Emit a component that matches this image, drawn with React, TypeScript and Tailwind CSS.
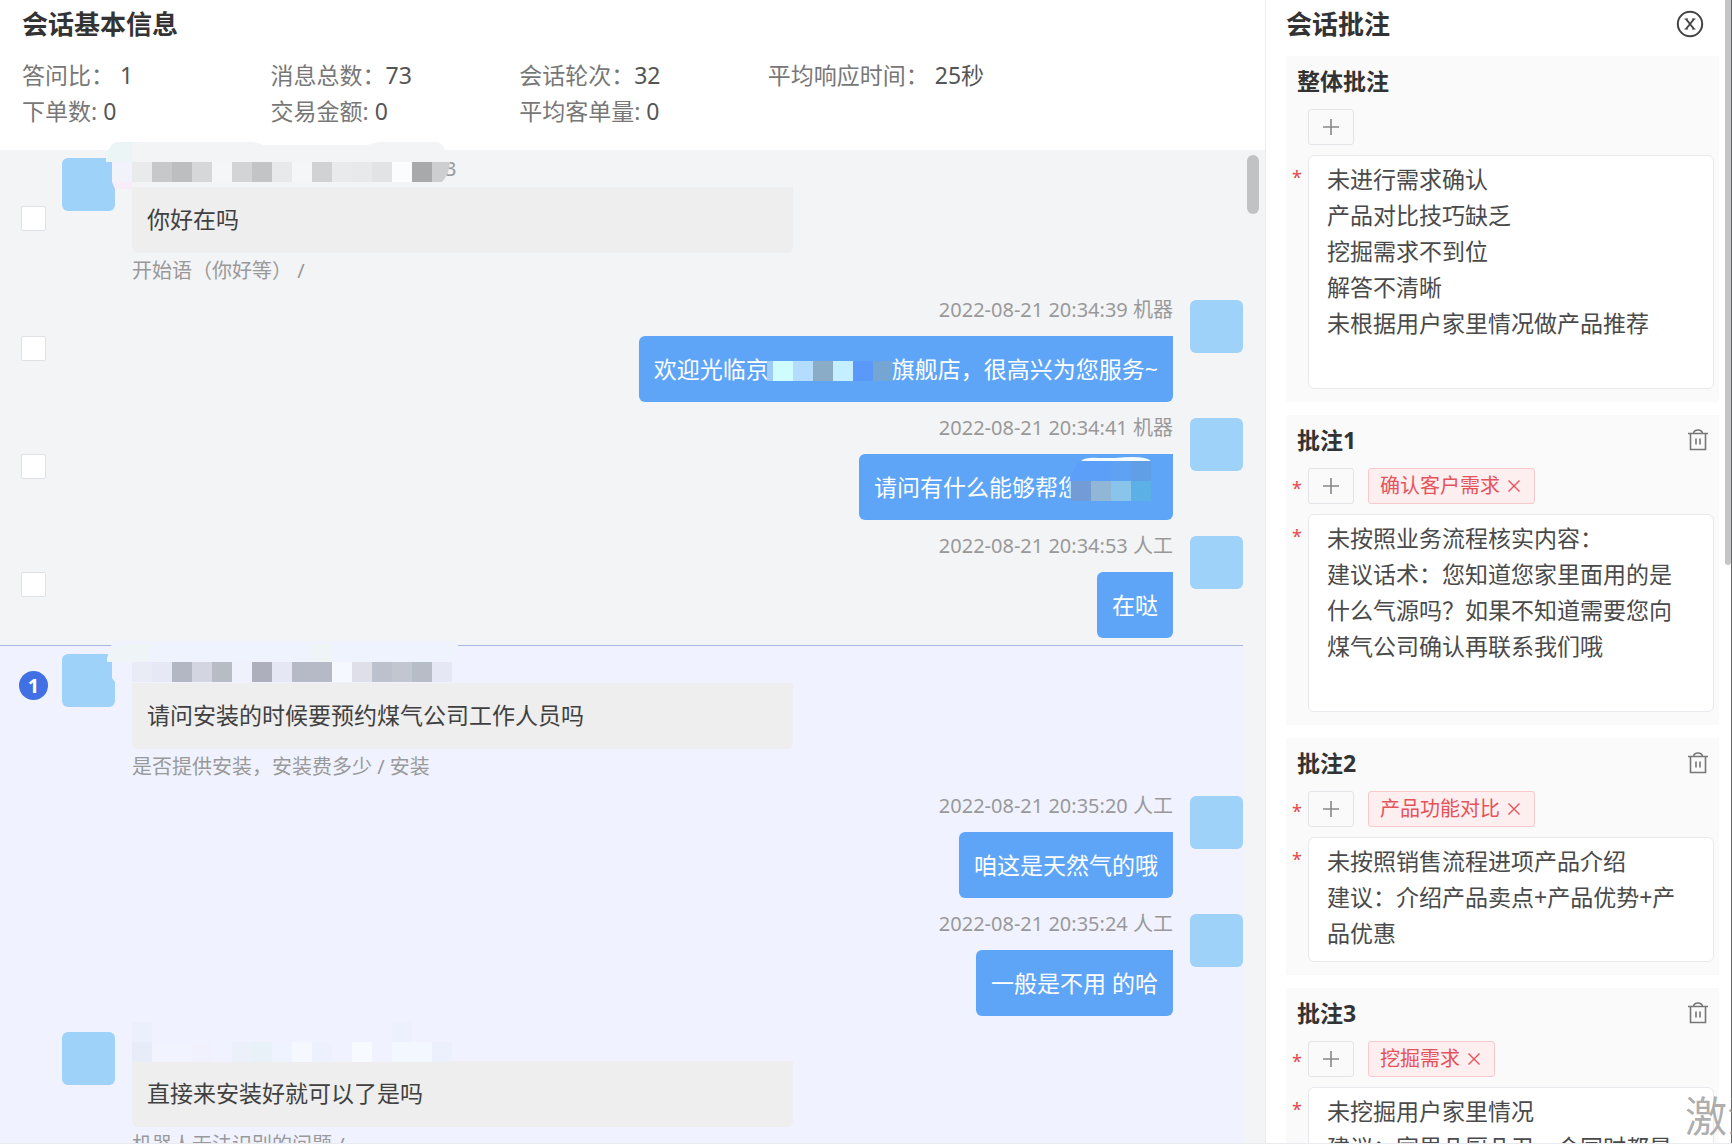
import type { ReactNode } from 'react'

type Message = {
	id: number
	from: 'user' | 'staff'
	time?: string
	sender?: ReactNode
	text: ReactNode
	note?: string
	badge?: number
	hideCheckbox?: boolean
}

type Annotation = {
	title: string
	tag?: string
	text: string
	height: string
}

const stats = [
	['答问比：', ' 1'],
	['消息总数：', '73'],
	['会话轮次：', '32'],
	['平均响应时间：', ' 25秒'],
	['', ''],
	['下单数:', ' 0'],
	['交易金额:', ' 0'],
	['平均客单量:', ' 0'],
]

const annotations: Annotation[] = [
	{
		title: '整体批注',
		text: '未进行需求确认\n产品对比技巧缺乏\n挖掘需求不到位\n解答不清晰\n未根据用户家里情况做产品推荐',
		height: 'h-[234px]',
	},
	{
		title: '批注1',
		tag: '确认客户需求',
		text: '未按照业务流程核实内容：\n建议话术：您知道您家里面用的是什么气源吗？如果不知道需要您向煤气公司确认再联系我们哦',
		height: 'h-[198px]',
	},
	{
		title: '批注2',
		tag: '产品功能对比',
		text: '未按照销售流程进项产品介绍\n建议：介绍产品卖点+产品优势+产品优惠',
		height: 'h-[125px]',
	},
	{
		title: '批注3',
		tag: '挖掘需求',
		text: '未挖掘用户家里情况\n建议：家里几厨几卫，会同时都是',
		height: 'h-[125px]',
	},
]

function Cells({ colors, y, x = 0 }: { colors: string[]; y: number; x?: number }) {
	return (
		<g shapeRendering="crispEdges">
			{colors.map((c, i) => (
				<rect key={i} x={x + i * 20} y={y} width="20" height="20" fill={c} />
			))}
		</g>
	)
}

function SenderMask({ children }: { children: ReactNode }) {
	return (
		<svg className="absolute left-0 top-0 h-[29px] w-80 overflow-visible" aria-hidden="true">
			{children}
		</svg>
	)
}

const senderOne = (
	<>
		<span className="pl-[313px]">3</span>
		<SenderMask>
			<path d="M-26 4V0Q-22 -16 -14 -16H121L132 -13H235L247 -16H306Q313 -14 318 4Z" fill="#f3f4f6" />
			<path d="M-26 4V0Q-22 -16 -14 -16H0V4Z" fill="#ecf5f5" />
			<path d="M-20 4H0V24H-20Z" fill="#f1f2fa" />
			<path d="M-20 24H0V31H-17Z" fill="#f7ecf7" />
			<Cells
				y={4}
				colors={['#e9eaec', '#c7c8ca', '#bdbec0', '#d6d7d9', '#f5f6f8', '#d3d4d6', '#c3c4c6', '#e8e9eb', '#f5f6f8', '#d1d2d4', '#e9eaec', '#e8e9eb', '#e2e3e5', '#fafcfe', '#a8a9ab']}
			/>
			<path d="M300 4H318Q318 15 310 24H300Z" fill="#cdced0" />
		</SenderMask>
	</>
)

const senderTwo = (
	<SenderMask>
		<path d="M-25 8V4L-19 -13H323L327 -7V8Z" fill="#eff3fe" />
		<path d="M-25 8V4L-19 -7L0 -10H18V8Z" fill="#eff4f6" />
		<path d="M180 -10H200V8H180Z" fill="#eff4f6" />
		<path d="M-20 8H0V28H-17L-20 24Z" fill="#f0f3ff" />
		<Cells
			y={8}
			colors={['#e9ecf6', '#e6e9f5', '#b3b6c3', '#d3d5e0', '#b8bdc5', '#eff1fd', '#adb0bc', '#e5e8f4', '#b6b9c6', '#b6b9c6', '#f5f8fe', '#dfdfe9', '#bdc0cd', '#c2c6d0', '#b7bdc6', '#e5e8f4']}
		/>
	</SenderMask>
)

const senderThree = (
	<SenderMask>
		<rect x="0" y="-10" width="20" height="20" fill="#ecf0fc" />
		<rect x="260" y="-10" width="20" height="20" fill="#edf1fe" />
		<Cells
			y={10}
			colors={['#e8ecf8', '#f1f3ff', '#f1f3ff', '#f1f1fd', '#f0f3ff', '#ebf0fa', '#e9f1f8', '#eff3ff', '#f5f9ff', '#edf0fd', '#f0f3ff', '#f7faff', '#f0f3ff', '#f3f7ff', '#f3f7ff', '#ecf0fd']}
		/>
	</SenderMask>
)

const welcomeText = (
	<>
		欢迎光临京
		<svg className="-ml-0.5 mt-1 h-5 w-[125px]" aria-hidden="true">
			<rect width="6" height="20" fill="#9dccfb" />
			<Cells x={6} y={0} colors={['#cffdff', '#b3dcfe', '#8bacc6', '#c5efff', '#5a99f8', '#74a5d3']} />
		</svg>
		旗舰店，很高兴为您服务~
	</>
)

const helpText = (
	<>
		请问有什么能够帮您
		<svg className="-ml-3 mb-4 h-11 w-[89px]" aria-hidden="true">
			<path d="M12 4Q16 0 30 1H46Q76 -2 82 4Z" fill="#f4fbff" />
			<path d="M12 4H82V24H0Q4 10 12 4Z" fill="#5c9ff9" />
			<path d="M42 4H62V24H42Z" fill="#5fa2f3" />
			<path d="M62 4H82V24H62Z" fill="#609fe6" />
			<path d="M0 24H6V44H3L0 38Z" fill="#a9dcfb" />
			<Cells x={2} y={24} colors={['#739bd6', '#92b6d6', '#89c5ea', '#5bb0e6']} />
		</svg>
	</>
)

const messages: Message[] = [
	{ id: 1, from: 'user', sender: senderOne, text: '你好在吗', note: '开始语（你好等） /' },
	{ id: 2, from: 'staff', time: '2022-08-21 20:34:39 机器', text: welcomeText },
	{ id: 3, from: 'staff', time: '2022-08-21 20:34:41 机器', text: helpText },
	{ id: 4, from: 'staff', time: '2022-08-21 20:34:53 人工', text: '在哒' },
]

const markedMessages: Message[] = [
	{ id: 5, from: 'user', badge: 1, sender: senderTwo, text: '请问安装的时候要预约煤气公司工作人员吗', note: '是否提供安装，安装费多少 / 安装' },
	{ id: 6, from: 'staff', time: '2022-08-21 20:35:20 人工', text: '咱这是天然气的哦', hideCheckbox: true },
	{ id: 7, from: 'staff', time: '2022-08-21 20:35:24 人工', text: '一般是不用 的哈', hideCheckbox: true },
	{ id: 8, from: 'user', sender: senderThree, text: '直接来安装好就可以了是吗', note: '机器人无法识别的问题 /', hideCheckbox: true },
]

function Avatar() {
	return <div className="size-[53px] shrink-0 rounded-md bg-[#9fd2f9]" />
}

function Select({ message }: { message: Message }) {
	if (message.badge) {
		return (
			<div className="mt-[17px] flex size-[29px] items-center justify-center rounded-full bg-[#416fe4] text-[20px] font-bold leading-5 text-white">
				{message.badge}
			</div>
		)
	}
	if (message.hideCheckbox) return null
	return (
		<input
			type="checkbox"
			aria-label={`选择消息 ${message.id}`}
			className={`size-[25px] appearance-none rounded-xs border border-[#dfe1e5] bg-white ${message.from === 'user' ? 'mt-12' : 'mt-9'}`}
		/>
	)
}

function MessageRow({ message }: { message: Message }) {
	return (
		<div className="flex pl-[19px]">
			<div className="mr-3.5 flex w-[29px] shrink-0 items-start justify-center">
				<Select message={message} />
			</div>
			{message.from === 'user' ? (
				<div className="flex gap-[17px]">
					<Avatar />
					<div>
						<div className="relative h-[29px] w-[661px] text-[20px] leading-[22px] text-[#999]">{message.sender}</div>
						<div className="rounded-b-md bg-[#eeeeee] px-[15px] pb-4 pt-3.5 leading-9 text-[#404040]">{message.text}</div>
						<div className="h-[31px] text-[20px] leading-9 text-[#999]">{message.note}</div>
					</div>
				</div>
			) : (
				<div className="flex flex-1 justify-end gap-[17px]">
					<div className="flex flex-col items-end">
						<div className="h-9 text-[20px] leading-5 text-[#999]">{message.time}</div>
						<div className="flex h-[66px] items-center rounded-md rounded-tr-none bg-[#5ea5f7] px-[15px] text-white">
							{message.text}
						</div>
					</div>
					<Avatar />
				</div>
			)}
		</div>
	)
}

function TrashIcon() {
	return (
		<svg width="20" height="22" viewBox="0 0 20 22" fill="none" stroke="#777" strokeWidth="1.6">
			<path d="M0 4.5H20M5.5 4.5C6 1.5 8 1 10 1S14 1.5 14.5 4.5M2.5 4.5V20.5H17.5V4.5M8 9.5V15.5M12 9.5V15.5" />
		</svg>
	)
}

function AnnotationCard({ item, index }: { item: Annotation; index: number }) {
	return (
		<section className="bg-[#fafafa] pb-[13px] pl-1.5 pr-[5px] pt-[7px]">
			<div className="flex h-9 items-center justify-between pl-[5px] pr-1.5">
				<h3 className="font-bold leading-9 text-[#333]">{item.title}</h3>
				{item.tag && (
					<button aria-label={`删除${item.title}`}>
						<TrashIcon />
					</button>
				)}
			</div>
			<div className="mt-2.5 flex h-9 items-center">
				<span className="w-4 text-[18px] leading-9 text-[#e5484d]">
					{item.tag && <span className="block pt-1">*</span>}
				</span>
				<button aria-label="添加标签" className="flex h-9 w-[46px] items-center justify-center rounded-[3px] border border-[#e2e4e8]">
					<svg width="16" height="16" stroke="#888" strokeWidth="1.6">
						<path d="M0 8H16M8 0V16" />
					</svg>
				</button>
				{item.tag && (
					<span className="ml-3.5 flex h-9 items-center rounded-[3px] border border-[#f8c9cc] bg-[#fdeeef] pl-[11px] pr-3.5 text-[20px] text-[#e5535a]">
						{item.tag}
						<button aria-label={`移除${item.tag}`} className="ml-2">
							<svg width="12" height="12" stroke="#e5535a" strokeWidth="1.4">
								<path d="M0.5 0.5L11.5 11.5M11.5 0.5L0.5 11.5" />
							</svg>
						</button>
					</span>
				)}
			</div>
			<div className="mt-2.5 flex items-start">
				<label htmlFor={`note-${index}`} className="w-4 pt-1 text-[18px] leading-9 text-[#e5484d]">
					*
				</label>
				<textarea
					id={`note-${index}`}
					defaultValue={item.text}
					className={`w-full flex-1 resize-none overflow-hidden rounded-md border border-[#e8e9ec] bg-white pl-[18px] pr-[26px] pt-[5px] leading-9 text-[#4a4a4a] ${item.height}`}
				/>
			</div>
		</section>
	)
}

export default function App() {
	return (
		<div className="h-screen overflow-hidden bg-white pb-1 font-['Noto_Sans','Noto_Sans_CJK_SC',sans-serif] text-[23px]">
			<div className="relative flex h-full overflow-hidden border-b border-[#e9eaee]">
				<main className="flex min-w-0 flex-1 flex-col">
					<header className="h-[150px] shrink-0 pl-[22px] pt-1.5">
						<h1 className="text-[26px] font-bold leading-9 text-[#333]">会话基本信息</h1>
						<dl className="mt-[15px] grid grid-cols-5 leading-9">
							{stats.map(([label, value], i) => (
								<div key={i} className="flex whitespace-pre">
									<dt className="text-[#777]">{label}</dt>
									<dd className="text-[#555]">{value}</dd>
								</div>
							))}
						</dl>
					</header>
					<div className="flex flex-1 bg-[#f3f4f6]">
						<div className="flex flex-1 flex-col">
							<div className="flex flex-col gap-4 pb-[7px] pt-2">
								{messages.map((m) => (
									<MessageRow key={m.id} message={m} />
								))}
							</div>
							<div className="flex flex-1 flex-col gap-4 border-t border-[#a9b9dc] bg-[#f0f3ff] pt-2">
								{markedMessages.map((m) => (
									<MessageRow key={m.id} message={m} />
								))}
							</div>
						</div>
						<div className="w-[22px] pl-1 pt-[5px]">
							<div className="h-[59px] w-3 rounded-full bg-[#c1c2c4]" />
						</div>
					</div>
				</main>

				<aside className="flex w-[467px] shrink-0 border-l border-[#ececee]">
					<div className="flex-1 pl-5 pr-1.5">
						<div className="flex h-14 items-start justify-between pr-[15px] pt-1.5">
							<h2 className="text-[26px] font-bold leading-9 text-[#333]">会话批注</h2>
							<button aria-label="关闭" className="mt-1">
								<svg width="28" height="28" fill="none" stroke="#444">
									<circle cx="14" cy="14" r="12.2" strokeWidth="2" />
									<path d="M10 9L18 19M18 9L10 19" strokeWidth="2" />
									<path d="M8.5 9H12M16 9H19.5M8.5 19H12M16 19H19.5" strokeWidth="1" />
								</svg>
							</button>
						</div>
						<div className="flex flex-col gap-[13px]">
							{annotations.map((item, i) => (
								<AnnotationCard key={item.title} item={item} index={i} />
							))}
						</div>
					</div>
					<div className="w-[7px] border-r border-[#666]">
						<div className="h-[565px] rounded-b-full bg-[#c4c5c7]" />
					</div>
				</aside>
				<div className="pointer-events-none absolute bottom-0 right-0 w-[47px] overflow-hidden whitespace-nowrap text-[42px] leading-[54px] text-[#8a8a8a]/70">
					激活
				</div>
			</div>
		</div>
	)
}
